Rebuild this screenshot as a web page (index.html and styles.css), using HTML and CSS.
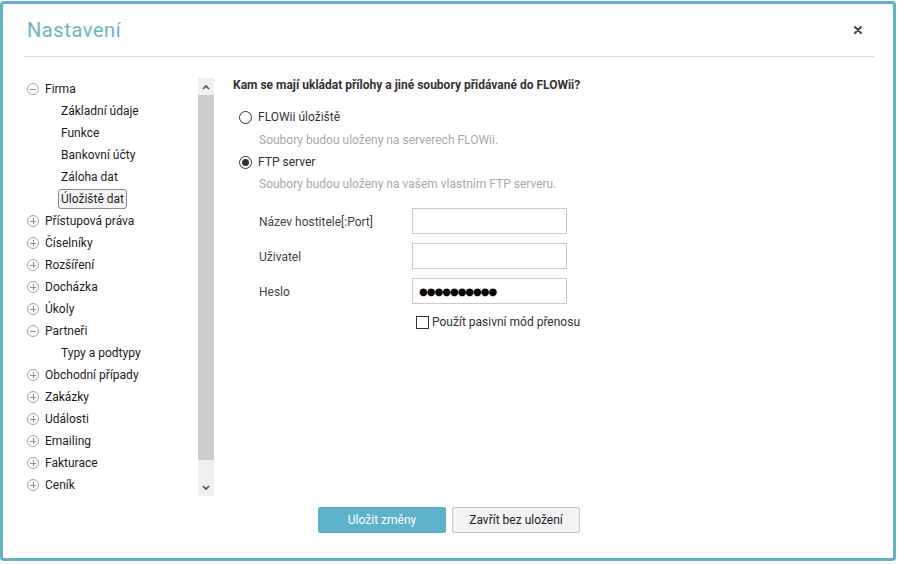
FILE: index.html
```html
<!DOCTYPE html>
<html lang="cs">
<head>
<meta charset="utf-8">
<title>Nastavení</title>
<link rel="stylesheet" href="styles.css">
</head>
<body>
<div class="dialog">
  <div class="dlg-header">
    <h1 class="dlg-title">Nastavení</h1>
    <button class="dlg-close" aria-label="Zavřít">
      <svg width="10" height="10" viewBox="0 0 10 10"><path d="M2 2L8 8M8 2L2 8" stroke="#444" stroke-width="2" stroke-linecap="round"/></svg>
    </button>
  </div>
  <div class="dlg-body">
    <div class="tree-panel">
      <ul class="tree">
        <li class="node"><span class="ti minus"></span>Firma</li>
        <li class="leaf">Základní údaje</li>
        <li class="leaf">Funkce</li>
        <li class="leaf">Bankovní účty</li>
        <li class="leaf">Záloha dat</li>
        <li class="leaf"><span class="sel">Úložiště dat</span></li>
        <li class="node"><span class="ti plus"></span>Přístupová práva</li>
        <li class="node"><span class="ti plus"></span>Číselníky</li>
        <li class="node"><span class="ti plus"></span>Rozšíření</li>
        <li class="node"><span class="ti plus"></span>Docházka</li>
        <li class="node"><span class="ti plus"></span>Úkoly</li>
        <li class="node"><span class="ti minus"></span>Partneři</li>
        <li class="leaf">Typy a podtypy</li>
        <li class="node"><span class="ti plus"></span>Obchodní případy</li>
        <li class="node"><span class="ti plus"></span>Zakázky</li>
        <li class="node"><span class="ti plus"></span>Události</li>
        <li class="node"><span class="ti plus"></span>Emailing</li>
        <li class="node"><span class="ti plus"></span>Fakturace</li>
        <li class="node"><span class="ti plus"></span>Ceník</li>
      </ul>
      <div class="scrollbar">
        <div class="sb-btn"><svg width="8" height="6" viewBox="0 0 8 6"><path d="M1 5L4 2L7 5" fill="none" stroke="#505050" stroke-width="1.6"/></svg></div>
        <div class="sb-thumb"></div>
        <div class="sb-track"></div>
        <div class="sb-btn"><svg width="8" height="6" viewBox="0 0 8 6"><path d="M1 1L4 4L7 1" fill="none" stroke="#505050" stroke-width="1.6"/></svg></div>
      </div>
    </div>
    <div class="content">
      <h2 class="question">Kam se mají ukládat přílohy a jiné soubory přidávané do FLOWii?</h2>
      <label class="radio-row"><span class="radio"></span>FLOWii úložiště</label>
      <div class="desc">Soubory budou uloženy na serverech FLOWii.</div>
      <label class="radio-row"><span class="radio checked"></span>FTP server</label>
      <div class="desc">Soubory budou uloženy na vašem vlastním FTP serveru.</div>
      <div class="form">
        <div class="frow"><span class="flabel">Název hostitele[:Port]</span><input class="finput" type="text" value=""></div>
        <div class="frow"><span class="flabel">Uživatel</span><input class="finput" type="text" value=""></div>
        <div class="frow"><span class="flabel">Heslo</span><input class="finput pwd" type="text" value="●●●●●●●●●●"></div>
        <label class="check-row"><span class="checkbox"></span>Použít pasivní mód přenosu</label>
      </div>
    </div>
  </div>
  <div class="dlg-footer">
    <button class="btn primary">Uložit změny</button>
    <button class="btn secondary">Zavřít bez uložení</button>
  </div>
</div>
</body>
</html>
```
FILE: styles.css
```css
* { box-sizing: border-box; }
html, body { margin: 0; padding: 0; background: #fff; }
body {
  font-family: Roboto, "Liberation Sans", Arial, sans-serif;
  font-size: 12px;
  color: #222;
  width: 899px;
  height: 564px;
  overflow: hidden;
}
.dialog {
  margin-top: 1px;
  width: 896px;
  height: 560px;
  border: 3px solid #63b2c8;
  border-radius: 4px;
  background: #fff;
  display: flex;
  flex-direction: column;
}
.dlg-header {
  margin: 0 19px 0 21px;
  height: 53px;
  border-bottom: 1px solid #dcdcdc;
  display: flex;
  align-items: center;
  justify-content: space-between;
  padding: 0 10px 0 3px;
}
.dlg-title {
  margin: 0;
  font-size: 20px;
  font-weight: 400;
  letter-spacing: 0.6px;
  color: #6cb6ca;
  line-height: 24px;
  padding-bottom: 1px;
}
.dlg-close {
  border: 0;
  background: transparent;
  padding: 0;
  width: 12px;
  height: 12px;
  display: flex;
  align-items: center;
  justify-content: center;
  margin-bottom: 1px;
}
.dlg-body {
  display: flex;
  padding-top: 21px;
  height: 439px;
}
.tree-panel {
  margin-left: 21px;
  display: flex;
  height: 418px;
}
.tree {
  list-style: none;
  margin: 0;
  padding: 0;
  width: 174px;
}
.tree li {
  height: 22px;
  display: flex;
  align-items: center;
  color: #1e1e1e;
  white-space: nowrap;
}
.tree .node { padding-left: 4px; }
.tree .leaf { padding-left: 37px; }
.sel {
  display: inline-block;
  border: 1px solid #8c8c8c;
  border-radius: 3px;
  background: #f4f4f4;
  padding: 0 2px;
  margin-left: -3px;
  line-height: 18px;
}
.ti {
  width: 12px;
  height: 12px;
  border: 1px solid #a4a4a4;
  border-radius: 50%;
  margin-right: 6px;
  margin-left: -1px;
  position: relative;
  flex: none;
}
.ti::before {
  content: "";
  position: absolute;
  left: 2px; right: 2px; top: 4.5px;
  height: 1px;
  background: #909090;
}
.ti.plus::after {
  content: "";
  position: absolute;
  top: 2px; bottom: 2px; left: 4.5px;
  width: 1px;
  background: #909090;
}
.scrollbar {
  width: 16px;
  height: 418px;
  background: #f0f0f0;
  display: flex;
  flex-direction: column;
}
.sb-btn {
  height: 17px;
  display: flex;
  align-items: center;
  justify-content: center;
  flex: none;
}
.sb-thumb {
  height: 365px;
  background: #cdcdcd;
  flex: none;
}
.sb-track { flex: 1; }
.content {
  margin-left: 19px;
  margin-top: -1px;
  flex: 1;
}
.question {
  margin: 0;
  font-size: 12px;
  font-weight: 700;
  line-height: 16px;
  color: #333;
}
.radio-row {
  margin-top: 13px;
  margin-left: 6px;
  height: 22px;
  display: flex;
  align-items: center;
  color: #333;
}
.desc + .radio-row { margin-top: 0; }
.radio {
  width: 13px;
  height: 13px;
  border: 1px solid #333;
  border-radius: 50%;
  margin-right: 6px;
  display: flex;
  align-items: center;
  justify-content: center;
  flex: none;
}
.radio.checked::after {
  content: "";
  width: 7px;
  height: 7px;
  border-radius: 50%;
  background: #333;
}
.desc {
  height: 22px;
  line-height: 22px;
  padding-top: 1px;
  padding-left: 26px;
  color: #a9a9a9;
}
.desc + .radio-row { padding-top: 2px; }
.form {
  margin-top: 14px;
  padding-left: 26px;
}
.frow {
  display: flex;
  align-items: center;
  height: 26px;
  margin-bottom: 9px;
}
.flabel {
  width: 153px;
  color: #444;
  padding-top: 2px;
}
.finput {
  width: 155px;
  height: 26px;
  border: 1px solid #c9c9c9;
  background: #fff;
  font-family: Roboto, sans-serif;
  font-size: 12px;
  padding: 0 6px;
  outline: none;
}
.pwd {
  font-family: "DejaVu Sans", sans-serif;
  font-size: 10px;
  letter-spacing: -1px;
  color: #000;
}
.check-row {
  margin-top: 4px;
  margin-left: 157px;
  display: flex;
  align-items: center;
  height: 18px;
  color: #333;
}
.checkbox {
  width: 13px;
  height: 13px;
  border: 1px solid #333;
  margin-right: 3px;
  flex: none;
}
.dlg-footer {
  display: flex;
  justify-content: center;
  gap: 6px;
  padding-top: 11px;
  padding-left: 2px;
}
.btn {
  width: 128px;
  height: 26px;
  border-radius: 2px;
  font-family: Roboto, sans-serif;
  font-size: 12px;
  padding: 0;
}
.btn.primary {
  background: #5db3cc;
  border: 1px solid #5db3cc;
  color: #fff;
}
.btn.secondary {
  background: #f3f3f5;
  border: 1px solid #c8c8c8;
  color: #222;
}
```
